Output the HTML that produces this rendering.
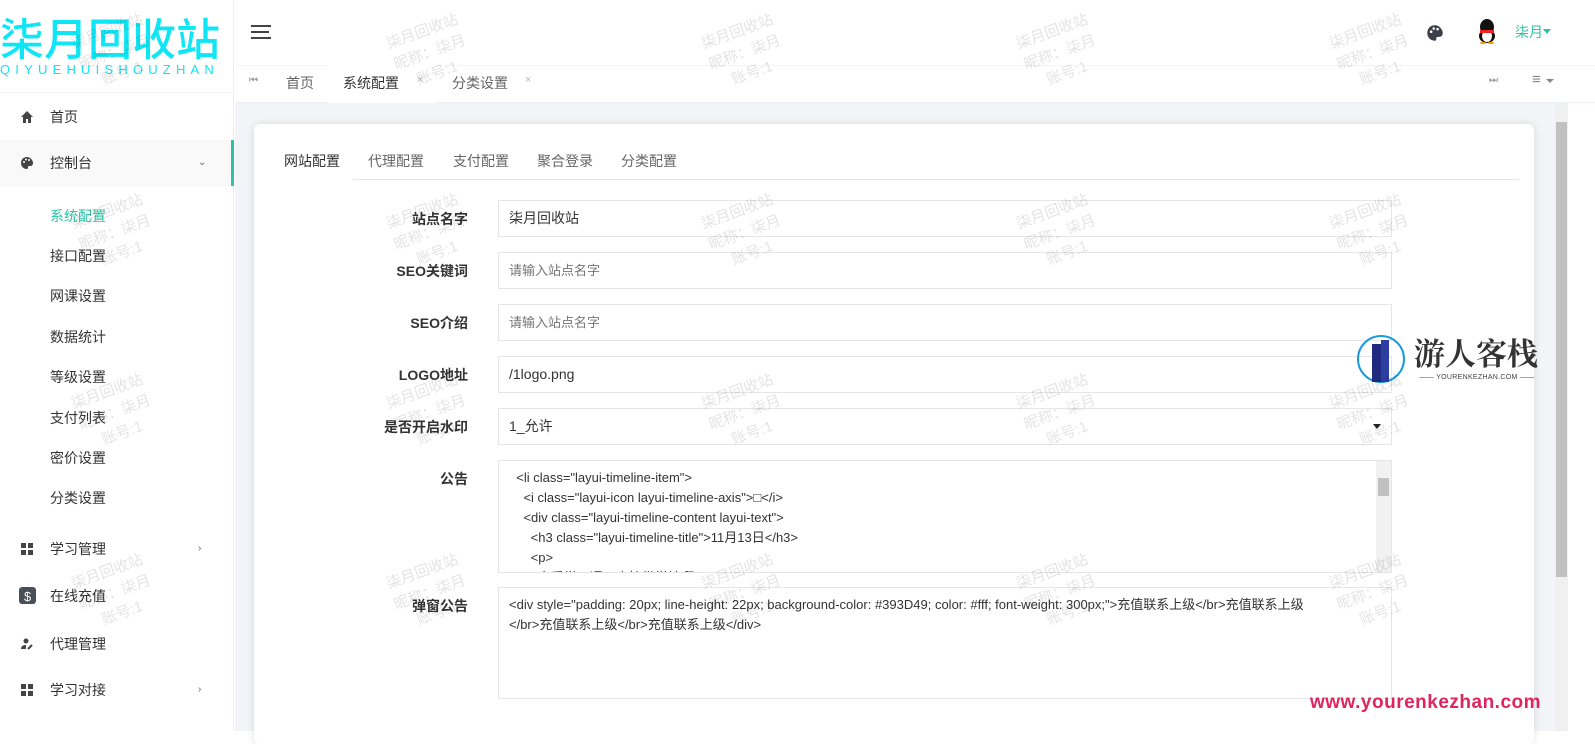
<!DOCTYPE html>
<html><head><meta charset="utf-8">
<style>
*{box-sizing:border-box;margin:0;padding:0}
body{width:1595px;height:731px;overflow:hidden;background:#fff;font-family:"Liberation Sans","Noto Sans CJK SC",sans-serif;font-size:14px;color:#333;position:relative}
.side{position:absolute;left:0;top:0;width:234px;height:731px;background:#fff;border-right:1px solid #eee}
.logo{position:absolute;left:0;top:12px;width:234px;overflow:hidden;white-space:nowrap}
.logo .big{font-size:44px;color:#0ee6f5;line-height:48px;font-family:"Noto Sans CJK SC",sans-serif;font-weight:500}
.logo .small{font-size:13px;color:#0ee6f5;letter-spacing:5.2px;line-height:16px;margin-top:2px}
.nav{position:absolute;left:0;width:234px;height:46px;line-height:46px;font-size:14px;color:#333}
.nav .ic{position:absolute;left:20px;top:16px;width:14px;height:14px}
.nav .t{position:absolute;left:50px}
.nav .ar{position:absolute;left:198px;font-size:10px;color:#666}
.sub{position:absolute;left:50px;font-size:14px;color:#333}
.top{position:absolute;left:235px;top:0;right:0;height:65px;background:#fff}
.tabs{position:absolute;left:235px;top:65px;right:0;height:38px;background:#fff;border-top:1px solid #f4f4f4;border-bottom:1px solid #eceff4}
.main{position:absolute;left:235px;top:103px;width:1320px;height:628px;background:#f2f4f7}
.card{position:absolute;left:254px;top:124px;width:1280px;height:620px;background:#fff;border-radius:6px;box-shadow:0 0 8px rgba(0,0,0,.12)}
.lab{position:absolute;width:200px;left:268px;text-align:right;font-size:14px;font-weight:bold;color:#333}
.inp{position:absolute;left:498px;width:894px;height:37px;border:1px solid #e6e6e6;background:#fff;padding-left:10px;line-height:35px;font-size:14px;color:#333}
.ph{color:#757575}
.wm{position:absolute;color:rgba(0,0,0,.11);font-size:15px;line-height:22px;transform:rotate(-20deg);text-align:center;width:110px;pointer-events:none}
</style></head><body>
<div class="side">
  <div class="logo"><div class="big">柒月回收站</div><div class="small">QIYUEHUISHOUZHAN</div></div>
  <div style="position:absolute;left:0;top:92px;width:234px;border-top:1px solid #f2f2f2"></div>
  <div class="nav" style="top:94px"><svg class="ic" viewBox="0 0 14 14"><path d="M7 1 L1 7 H3 V13 H6 V9 H8 V13 H11 V7 H13 Z" fill="#444"/></svg><span class="t">首页</span></div>
  <div class="nav" style="top:140px;background:#f9f9f9"><svg class="ic" viewBox="0 0 14 14"><path d="M7 1C3 1 1 4 1 7c0 3 2 6 6 6 1 0 1-1 1-2s1-1 2-1c2 0 3-1 3-3 0-3-3-6-6-6z" fill="#444"/><circle cx="4" cy="6" r="1" fill="#fff"/><circle cx="6" cy="3.5" r="1" fill="#fff"/><circle cx="9" cy="4" r="1" fill="#fff"/></svg><span class="t">控制台</span><span class="ar">⌄</span><div style="position:absolute;right:0;top:0;width:3px;height:46px;background:#2ec3a6"></div></div>
  <div class="sub" style="top:206px;color:#2ec3a6">系统配置</div>
  <div class="sub" style="top:246px">接口配置</div>
  <div class="sub" style="top:286px">网课设置</div>
  <div class="sub" style="top:327px">数据统计</div>
  <div class="sub" style="top:367px">等级设置</div>
  <div class="sub" style="top:408px">支付列表</div>
  <div class="sub" style="top:448px">密价设置</div>
  <div class="sub" style="top:488px">分类设置</div>
  <div class="nav" style="top:526px"><svg class="ic" viewBox="0 0 14 14"><rect x="1" y="1" width="5" height="5" fill="#444"/><rect x="8" y="1" width="5" height="5" fill="#444"/><rect x="1" y="8" width="5" height="5" fill="#444"/><rect x="8" y="8" width="5" height="5" fill="#444"/></svg><span class="t">学习管理</span><span class="ar">›</span></div>
  <div class="nav" style="top:573px"><svg class="ic" viewBox="0 0 16 16" style="width:17px;height:17px;top:14px;left:19px"><rect width="16" height="16" rx="3" fill="#4a4f57"/><text x="8" y="13" font-size="12" fill="#fff" text-anchor="middle" font-family="Liberation Sans">$</text></svg><span class="t">在线充值</span></div>
  <div class="nav" style="top:621px"><svg class="ic" viewBox="0 0 14 14"><circle cx="6" cy="4" r="2.5" fill="#444"/><path d="M1 12c0-3 2-4 5-4v4z" fill="#444"/><path d="M8 12l4-4" stroke="#444" stroke-width="2"/></svg><span class="t">代理管理</span></div>
  <div class="nav" style="top:667px"><svg class="ic" viewBox="0 0 14 14"><rect x="1" y="1" width="5" height="5" fill="#444"/><rect x="8" y="1" width="5" height="5" fill="#444"/><rect x="1" y="8" width="5" height="5" fill="#444"/><rect x="8" y="8" width="5" height="5" fill="#444"/></svg><span class="t">学习对接</span><span class="ar">›</span></div>
</div>
<div class="top">
  <svg style="position:absolute;left:16px;top:24px" width="20" height="16"><rect y="1" width="20" height="2" fill="#444"/><rect y="7" width="18" height="2" fill="#444"/><rect y="13" width="20" height="2" fill="#444"/></svg>
  <svg style="position:absolute;left:1191px;top:24px" width="18" height="18" viewBox="0 0 14 14"><path d="M7 1C3 1 1 4 1 7c0 3 2 6 6 6 1 0 1-1 1-2s1-1 2-1c2 0 3-1 3-3 0-3-3-6-6-6z" fill="#3a3f4a"/><circle cx="4" cy="6" r="1" fill="#fff"/><circle cx="6" cy="3.5" r="1" fill="#fff"/><circle cx="9" cy="4" r="1" fill="#fff"/></svg>
  <svg style="position:absolute;left:1241px;top:18px" width="22" height="26" viewBox="0 0 22 26"><ellipse cx="11" cy="9" rx="7" ry="8" fill="#111"/><ellipse cx="11" cy="18" rx="8" ry="7" fill="#111"/><ellipse cx="11" cy="18" rx="5" ry="6" fill="#fff"/><rect x="4" y="12" width="14" height="3" fill="#e22"/><ellipse cx="7" cy="25" rx="3" ry="1.3" fill="#f5a000"/><ellipse cx="15" cy="25" rx="3" ry="1.3" fill="#f5a000"/></svg>
  <span style="position:absolute;left:1280px;top:22px;color:#2ec3a6;font-size:14px">柒月</span>
  <span style="position:absolute;left:1308px;top:29px;border:4px solid transparent;border-top:5px solid #2ec3a6"></span>
</div>
<div class="tabs">
  <span style="position:absolute;left:14px;top:9px;font-size:10px;color:#999">⏮</span>
  <span style="position:absolute;left:51px;top:7px;color:#666">首页</span>
  <div style="position:absolute;left:92px;top:-1px;width:110px;height:38px;background:#fff;border-bottom:2px solid #fff"></div>
  <span style="position:absolute;left:108px;top:7px;color:#333">系统配置</span>
  <span style="position:absolute;left:182px;top:8px;color:#bbb;font-size:11px">×</span>
  <span style="position:absolute;left:217px;top:7px;color:#666">分类设置</span>
  <span style="position:absolute;left:290px;top:8px;color:#bbb;font-size:11px">×</span>
  <span style="position:absolute;left:1254px;top:9px;font-size:10px;color:#999">⏭</span>
  <span style="position:absolute;left:1297px;top:5px;color:#888;font-size:15px">≡</span>
  <span style="position:absolute;left:1311px;top:13px;border:4px solid transparent;border-top:4px solid #888"></span>
</div>
<div class="main"></div>
<div style="position:absolute;left:1555px;top:103px;width:13px;height:628px;background:#f0f0f0"></div>
<div style="position:absolute;left:1556px;top:122px;width:11px;height:455px;background:#c1c1c1"></div>
<div class="card"></div>
<div style="position:absolute;left:284px;top:151px;color:#333">网站配置</div>
<div style="position:absolute;left:368px;top:151px;color:#666">代理配置</div>
<div style="position:absolute;left:453px;top:151px;color:#666">支付配置</div>
<div style="position:absolute;left:537px;top:151px;color:#666">聚合登录</div>
<div style="position:absolute;left:621px;top:151px;color:#666">分类配置</div>
<div style="position:absolute;left:353px;top:179px;width:1166px;border-top:1px solid #e6e6e6"></div>
<div class="lab" style="top:209px">站点名字</div><div class="inp" style="top:200px">柒月回收站</div>
<div class="lab" style="top:261px">SEO关键词</div><div class="inp ph" style="top:252px;font-size:13px">请输入站点名字</div>
<div class="lab" style="top:313px">SEO介绍</div><div class="inp ph" style="top:304px;font-size:13px">请输入站点名字</div>
<div class="lab" style="top:365px">LOGO地址</div><div class="inp" style="top:356px">/1logo.png</div>
<div class="lab" style="top:417px">是否开启水印</div><div class="inp" style="top:408px">1_允许<span style="position:absolute;right:10px;top:15px;border:4px solid transparent;border-top:5px solid #222"></span></div>
<div class="lab" style="top:469px">公告</div>
<div class="inp" style="top:460px;height:113px;line-height:20px;padding-top:7px;font-size:13px;overflow:hidden;white-space:pre">  &lt;li class="layui-timeline-item"&gt;
    &lt;i class="layui-icon layui-timeline-axis"&gt;&#9633;&lt;/i&gt;
    &lt;div class="layui-timeline-content layui-text"&gt;
      &lt;h3 class="layui-timeline-title"&gt;11月13日&lt;/h3&gt;
      &lt;p&gt;
        亲爱学习通一太接带学地啊
        <span style="position:absolute;right:0;top:0;width:15px;height:111px;background:#f1f1f1"></span><span style="position:absolute;right:2px;top:17px;width:11px;height:18px;background:#c1c1c1"></span></div>
<div class="lab" style="top:596px">弹窗公告</div>
<div class="inp" style="top:587px;height:112px;line-height:20px;padding-top:7px;font-size:13px">&lt;div style="padding: 20px; line-height: 22px; background-color: #393D49; color: #fff; font-weight: 300px;"&gt;充值联系上级&lt;/br&gt;充值联系上级<br>&lt;/br&gt;充值联系上级&lt;/br&gt;充值联系上级&lt;/div&gt;</div>
<svg style="position:absolute;left:1356px;top:334px" width="50" height="50"><circle cx="25" cy="25" r="23" fill="none" stroke="#1a9be0" stroke-width="2"/><rect x="16" y="10" width="9" height="38" fill="#1f2a80"/><rect x="25" y="6" width="8" height="42" fill="#2c3ea0"/></svg>
<div style="position:absolute;left:1414px;top:333px;font-size:31px;font-weight:bold;color:#333;font-family:'Noto Serif CJK SC',serif;line-height:38px">游人客栈</div>
<div style="position:absolute;left:1414px;top:374px;font-size:7px;color:#444;width:126px;text-align:center;letter-spacing:.3px">—— YOURENKEZHAN.COM ——</div>
<div style="position:absolute;left:1310px;top:692px;font-size:19px;font-weight:bold;color:#e0245e;letter-spacing:.5px">www.yourenkezhan.com</div>
<div class="wm" style="left:60px;top:20px">柒月回收站<br>昵称：柒月<br>账号:1</div>
<div class="wm" style="left:375px;top:20px">柒月回收站<br>昵称：柒月<br>账号:1</div>
<div class="wm" style="left:690px;top:20px">柒月回收站<br>昵称：柒月<br>账号:1</div>
<div class="wm" style="left:1005px;top:20px">柒月回收站<br>昵称：柒月<br>账号:1</div>
<div class="wm" style="left:1318px;top:20px">柒月回收站<br>昵称：柒月<br>账号:1</div>
<div class="wm" style="left:60px;top:200px">柒月回收站<br>昵称：柒月<br>账号:1</div>
<div class="wm" style="left:375px;top:200px">柒月回收站<br>昵称：柒月<br>账号:1</div>
<div class="wm" style="left:690px;top:200px">柒月回收站<br>昵称：柒月<br>账号:1</div>
<div class="wm" style="left:1005px;top:200px">柒月回收站<br>昵称：柒月<br>账号:1</div>
<div class="wm" style="left:1318px;top:200px">柒月回收站<br>昵称：柒月<br>账号:1</div>
<div class="wm" style="left:60px;top:380px">柒月回收站<br>昵称：柒月<br>账号:1</div>
<div class="wm" style="left:375px;top:380px">柒月回收站<br>昵称：柒月<br>账号:1</div>
<div class="wm" style="left:690px;top:380px">柒月回收站<br>昵称：柒月<br>账号:1</div>
<div class="wm" style="left:1005px;top:380px">柒月回收站<br>昵称：柒月<br>账号:1</div>
<div class="wm" style="left:1318px;top:380px">柒月回收站<br>昵称：柒月<br>账号:1</div>
<div class="wm" style="left:60px;top:560px">柒月回收站<br>昵称：柒月<br>账号:1</div>
<div class="wm" style="left:375px;top:560px">柒月回收站<br>昵称：柒月<br>账号:1</div>
<div class="wm" style="left:690px;top:560px">柒月回收站<br>昵称：柒月<br>账号:1</div>
<div class="wm" style="left:1005px;top:560px">柒月回收站<br>昵称：柒月<br>账号:1</div>
<div class="wm" style="left:1318px;top:560px">柒月回收站<br>昵称：柒月<br>账号:1</div>
</body></html>
